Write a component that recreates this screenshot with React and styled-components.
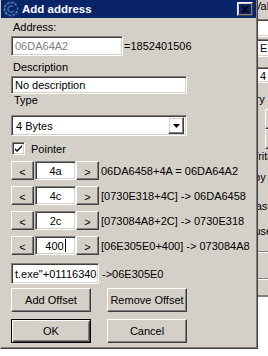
import React from 'react';
import styled, { createGlobalStyle, css } from 'styled-components';

const Global = createGlobalStyle`
  html, body { margin: 0; padding: 0; background: #ffffff; }
  body {
    width: 268px; height: 356px; overflow: hidden;
    font-family: "Liberation Sans", Arial, sans-serif;
    font-size: 11px; color: #000;
  }
  * { box-sizing: border-box; }
`;

const sunken = css`
  border: 1px solid;
  border-color: #808080 #ffffff #ffffff #808080;
  box-shadow: inset 1px 1px #404040, inset -1px -1px #d4d0c8;
`;

const raised = css`
  border: 1px solid;
  border-color: #ffffff #404040 #404040 #ffffff;
  box-shadow: inset -1px -1px #808080, inset 1px 1px #d4d0c8;
`;

const Desktop = styled.div`
  position: relative;
  width: 268px;
  height: 356px;
  overflow: hidden;
  background: #ffffff;
`;

/* ---------- window behind the dialog ---------- */
const BackWindow = styled.div`
  position: absolute;
  left: 200px;
  top: 0;
  width: 100px;
  height: 297px;
  background: #d4d0c8;
  border-bottom: 2px solid #808080;
  display: flex;
  flex-direction: column;
  padding-left: 52px;
`;

const BackText = styled.div`
  height: 13px;
  line-height: 13px;
  white-space: nowrap;
  margin-left: ${p => p.$x}px;
  margin-top: ${p => p.$top || 0}px;
`;

const BackEdit = styled.div`
  ${sunken};
  background: #fff;
  height: ${p => p.$h}px;
  margin-top: ${p => p.$top}px;
  padding: 2px 0 0 7px;
  line-height: 13px;
  white-space: nowrap;
`;

const BackBox = styled.div`
  ${raised};
  height: 20px;
  margin-left: 13px;
  margin-top: ${p => p.$top}px;
`;

const BackRule = styled.div`
  margin-top: ${p => p.$top}px;
  border-top: 1px solid #808080;
  border-bottom: 1px solid #ffffff;
`;

/* ---------- dialog ---------- */
const Dialog = styled.div`
  position: absolute;
  left: 0;
  top: 0;
  width: 258px;
  height: 349px;
  background: #d4d0c8;
  border-left: 1px solid #d4d0c8;
  border-right: 1px solid #404040;
  border-bottom: 1px solid #404040;
  box-shadow: inset -1px -1px #808080;
  display: flex;
  flex-direction: column;
`;

const TitleBar = styled.div`
  height: 18px;
  margin-right: 1px;
  background: #0a246a;
  display: flex;
  align-items: center;
  padding-left: 2px;
  padding-right: 2px;
`;

const TitleText = styled.div`
  flex: 1;
  color: #fff;
  font-weight: bold;
  font-size: 11.5px;
  margin-left: 3px;
  line-height: 18px;
`;

const CloseButton = styled.div`
  ${raised};
  width: 16px;
  height: 14px;
  display: flex;
  align-items: center;
  justify-content: center;
  margin-right: 1px;
`;

const Body = styled.div`
  display: flex;
  flex-direction: column;
  padding-left: 10px;
`;

const Label = styled.div`
  height: 13px;
  line-height: 13px;
  margin-left: ${p => p.$indent || 1}px;
  margin-top: ${p => p.$top}px;
  white-space: nowrap;
`;

const Row = styled.div`
  display: flex;
  align-items: center;
  margin-top: ${p => p.$top}px;
`;

const Edit = styled.div`
  ${sunken};
  background: #fff;
  width: ${p => p.$w}px;
  height: ${p => p.$h || 20}px;
  color: ${p => (p.$disabled ? '#808080' : '#000')};
  padding-left: ${p => (p.$center ? 0 : 3)}px;
  display: flex;
  align-items: center;
  justify-content: ${p => (p.$center ? 'center' : 'flex-start')};
  white-space: nowrap;
  overflow: hidden;
`;

const AfterText = styled.div`
  margin-left: ${p => p.$gap}px;
  white-space: nowrap;
`;

const Combo = styled.div`
  ${sunken};
  background: #fff;
  width: 176px;
  height: 21px;
  display: flex;
  align-items: center;
  padding: 0 2px 0 4px;
`;

const ComboValue = styled.div`
  flex: 1;
`;

const DropButton = styled.div`
  ${raised};
  width: 16px;
  height: 17px;
  display: flex;
  align-items: center;
  justify-content: center;
`;

const CheckBox = styled.div`
  ${sunken};
  background: #fff;
  width: 13px;
  height: 13px;
  margin-left: 1px;
  display: flex;
  align-items: center;
  justify-content: center;
`;

const CheckLabel = styled.div`
  margin-left: 6px;
`;

const SmallButton = styled.div`
  ${raised};
  width: 23px;
  height: 19px;
  display: flex;
  align-items: center;
  justify-content: center;
  padding-top: 2px;
  margin-left: ${p => p.$ml || 0}px;
  margin-right: ${p => p.$mr || 0}px;
`;

const Caret = styled.span`
  display: inline-block;
  width: 1px;
  height: 13px;
  background: #000;
  margin-left: 1px;
`;

const ButtonRow = styled.div`
  display: flex;
  gap: 16px;
  margin-top: ${p => p.$top}px;
`;

const Button = styled.div`
  width: 80px;
  height: 24px;
  display: flex;
  align-items: center;
  justify-content: center;
  ${p =>
    p.$default
      ? css`
          border: 1px solid #000;
          box-shadow: inset 1px 1px #fff, inset -1px -1px #404040,
            inset 2px 2px #d4d0c8, inset -2px -2px #808080;
        `
      : raised};
`;

const AppIcon = () => (
  <svg width="16" height="16" viewBox="0 0 16 16">
    <circle cx="8" cy="8" r="6.5" fill="none" stroke="#1c3c7c" strokeWidth="3" strokeDasharray="33 8" transform="rotate(20 8 8)" />
    <circle cx="8" cy="8" r="6.5" fill="none" stroke="#5aa8d8" strokeWidth="1" strokeDasharray="2 2" transform="rotate(20 8 8)" />
    <circle cx="8" cy="8" r="3" fill="none" stroke="#2d6cb0" strokeWidth="1.5" strokeDasharray="14 6" transform="rotate(30 8 8)" />
  </svg>
);

const CloseGlyph = () => (
  <svg width="8" height="7" viewBox="0 0 8 7">
    <path d="M0 0h2l2 2 2-2h2L5 3.5 8 7H6L4 5 2 7H0l3-3.5z" fill="#000" />
  </svg>
);

const DownArrow = () => (
  <svg width="7" height="4" viewBox="0 0 7 4">
    <path d="M0 0h7L3.5 4z" fill="#000" />
  </svg>
);

const CheckMark = () => (
  <svg width="7" height="7" viewBox="0 0 7 7">
    <path d="M0 2l2 2 5-5v2l-5 5-2-2z" fill="#000" transform="translate(0 1)" />
  </svg>
);

const offsets = [
  { v: '4a', text: '06DA6458+4A = 06DA64A2' },
  { v: '4c', text: '[0730E318+4C] -> 06DA6458' },
  { v: '2c', text: '[073084A8+2C] -> 0730E318' },
  { v: '400', text: '[06E305E0+400] -> 073084A8', caret: true },
];

export default function App() {
  return (
    <Desktop>
      <Global />
      <BackWindow>
        <BackText $x={2} $top={0}>Value</BackText>
        <BackEdit $h={18} $top={6}></BackEdit>
        <BackEdit $h={18} $top={2}>E:</BackEdit>
        <BackEdit $h={16} $top={10}>4</BackEdit>
        <BackText $x={-27} $top={10}>Memory</BackText>
        <BackBox $top={3} />
        <BackBox $top={0} />
        <BackText $x={-4} $top={1}>Writable</BackText>
        <BackText $x={-12} $top={8}>Copy</BackText>
        <BackText $x={-3} $top={16}>Fast</BackText>
        <BackText $x={-11} $top={12}>Pause</BackText>
        <BackRule $top={13} />
        <BackRule $top={25} />
      </BackWindow>
      <Dialog>
        <TitleBar>
          <AppIcon />
          <TitleText>Add address</TitleText>
          <CloseButton><CloseGlyph /></CloseButton>
        </TitleBar>
        <Body>
          <Label $top={3} $indent={2}>Address:</Label>
          <Row $top={2}>
            <Edit $w={112} $disabled>06DA64A2</Edit>
            <AfterText $gap={1}>=1852401506</AfterText>
          </Row>
          <Label $top={5} $indent={2}>Description</Label>
          <Row $top={2}>
            <Edit $w={176} $h={18}>No description</Edit>
          </Row>
          <Label $top={0} $indent={3}>Type</Label>
          <Row $top={8}>
            <Combo>
              <ComboValue>4 Bytes</ComboValue>
              <DropButton><DownArrow /></DropButton>
            </Combo>
          </Row>
          <Row $top={6}>
            <CheckBox><CheckMark /></CheckBox>
            <CheckLabel>Pointer</CheckLabel>
          </Row>
          {offsets.map((o, i) => (
            <Row key={o.v} $top={6}>
              <SmallButton $mr={1}>&lt;</SmallButton>
              <Edit $w={41} $h={19} $center>
                {o.v}
                {o.caret && <Caret />}
              </Edit>
              <SmallButton>&gt;</SmallButton>
              <AfterText $gap={2}>{o.text}</AfterText>
            </Row>
          ))}
          <Row $top={8}>
            <Edit $w={88} $h={21}>t.exe"+01116340</Edit>
            <AfterText $gap={3}>-&gt;06E305E0</AfterText>
          </Row>
          <ButtonRow $top={4}>
            <Button>Add Offset</Button>
            <Button>Remove Offset</Button>
          </ButtonRow>
          <ButtonRow $top={7}>
            <Button $default>OK</Button>
            <Button>Cancel</Button>
          </ButtonRow>
        </Body>
      </Dialog>
    </Desktop>
  );
}
